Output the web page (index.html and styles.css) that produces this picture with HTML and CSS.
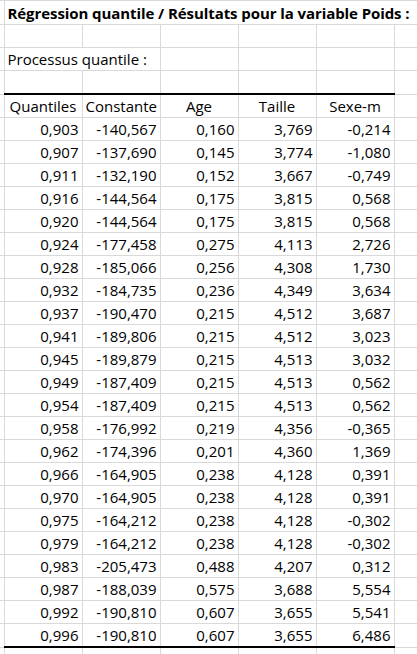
FILE: index.html
```html
<!DOCTYPE html>
<html lang="fr">
<head>
<meta charset="utf-8">
<title>Régression quantile</title>
<link rel="stylesheet" href="styles.css">
</head>
<body>
<table class="sheet">
  <colgroup>
    <col class="c-edge"><col class="c-w"><col class="c-w"><col class="c-w"><col class="c-w"><col class="c-w"><col class="c-last">
  </colgroup>
  <tbody>
    <tr class="r-top"><td></td><td></td><td></td><td></td><td></td><td></td><td></td></tr>
    <tr class="r-title"><td></td><td colspan="6" class="title">Régression quantile / Résultats pour la variable Poids :</td></tr>
    <tr><td></td><td></td><td></td><td></td><td></td><td></td><td></td></tr>
    <tr><td></td><td colspan="2" class="label">Processus quantile :</td><td></td><td></td><td></td><td></td></tr>
    <tr><td></td><td></td><td></td><td></td><td></td><td></td><td></td></tr>
    <tr class="r-head"><td></td><td>Quantiles</td><td>Constante</td><td>Age</td><td>Taille</td><td>Sexe-m</td><td></td></tr>
    <tr class="r-data"><td></td><td>0,903</td><td>-140,567</td><td>0,160</td><td>3,769</td><td>-0,214</td><td></td></tr>
    <tr class="r-data"><td></td><td>0,907</td><td>-137,690</td><td>0,145</td><td>3,774</td><td>-1,080</td><td></td></tr>
    <tr class="r-data"><td></td><td>0,911</td><td>-132,190</td><td>0,152</td><td>3,667</td><td>-0,749</td><td></td></tr>
    <tr class="r-data"><td></td><td>0,916</td><td>-144,564</td><td>0,175</td><td>3,815</td><td>0,568</td><td></td></tr>
    <tr class="r-data"><td></td><td>0,920</td><td>-144,564</td><td>0,175</td><td>3,815</td><td>0,568</td><td></td></tr>
    <tr class="r-data"><td></td><td>0,924</td><td>-177,458</td><td>0,275</td><td>4,113</td><td>2,726</td><td></td></tr>
    <tr class="r-data"><td></td><td>0,928</td><td>-185,066</td><td>0,256</td><td>4,308</td><td>1,730</td><td></td></tr>
    <tr class="r-data"><td></td><td>0,932</td><td>-184,735</td><td>0,236</td><td>4,349</td><td>3,634</td><td></td></tr>
    <tr class="r-data"><td></td><td>0,937</td><td>-190,470</td><td>0,215</td><td>4,512</td><td>3,687</td><td></td></tr>
    <tr class="r-data"><td></td><td>0,941</td><td>-189,806</td><td>0,215</td><td>4,512</td><td>3,023</td><td></td></tr>
    <tr class="r-data"><td></td><td>0,945</td><td>-189,879</td><td>0,215</td><td>4,513</td><td>3,032</td><td></td></tr>
    <tr class="r-data"><td></td><td>0,949</td><td>-187,409</td><td>0,215</td><td>4,513</td><td>0,562</td><td></td></tr>
    <tr class="r-data"><td></td><td>0,954</td><td>-187,409</td><td>0,215</td><td>4,513</td><td>0,562</td><td></td></tr>
    <tr class="r-data"><td></td><td>0,958</td><td>-176,992</td><td>0,219</td><td>4,356</td><td>-0,365</td><td></td></tr>
    <tr class="r-data"><td></td><td>0,962</td><td>-174,396</td><td>0,201</td><td>4,360</td><td>1,369</td><td></td></tr>
    <tr class="r-data"><td></td><td>0,966</td><td>-164,905</td><td>0,238</td><td>4,128</td><td>0,391</td><td></td></tr>
    <tr class="r-data"><td></td><td>0,970</td><td>-164,905</td><td>0,238</td><td>4,128</td><td>0,391</td><td></td></tr>
    <tr class="r-data"><td></td><td>0,975</td><td>-164,212</td><td>0,238</td><td>4,128</td><td>-0,302</td><td></td></tr>
    <tr class="r-data"><td></td><td>0,979</td><td>-164,212</td><td>0,238</td><td>4,128</td><td>-0,302</td><td></td></tr>
    <tr class="r-data"><td></td><td>0,983</td><td>-205,473</td><td>0,488</td><td>4,207</td><td>0,312</td><td></td></tr>
    <tr class="r-data"><td></td><td>0,987</td><td>-188,039</td><td>0,575</td><td>3,688</td><td>5,554</td><td></td></tr>
    <tr class="r-data"><td></td><td>0,992</td><td>-190,810</td><td>0,607</td><td>3,655</td><td>5,541</td><td></td></tr>
    <tr class="r-data r-lastdata"><td></td><td>0,996</td><td>-190,810</td><td>0,607</td><td>3,655</td><td>6,486</td><td></td></tr>
    <tr class="r-after"><td></td><td></td><td></td><td></td><td></td><td></td><td></td></tr>
  </tbody>
</table>
</body>
</html>
```

FILE: styles.css
```css
html, body {
  margin: 0;
  padding: 0;
  background: #ffffff;
}

body {
  font-family: "Open Sans", "Liberation Sans", sans-serif;
  font-size: 15px;
  color: #000000;
  overflow: hidden;
}

.sheet {
  border-collapse: collapse;
  table-layout: fixed;
  width: 417px;
}

.c-edge { width: 4px; }
.c-w { width: 78px; }
.c-last { width: 23px; }

.sheet td {
  border: 1px solid #d9d9d9;
  padding: 0 3px 3px 3px;
  height: 19px;
  line-height: 16px;
  vertical-align: bottom;
  white-space: nowrap;
  overflow: visible;
}

.sheet tr > td:first-child {
  border-left: 0;
  padding: 0;
}

.sheet tr > td:last-child {
  border-right: 0;
}

.sheet .r-top td {
  border-top: 0;
  height: 0;
  padding: 0;
  line-height: 0;
  font-size: 0;
}

.sheet .r-title td {
  height: 20px;
}

.title {
  font-weight: 700;
  padding-left: 4px;
  letter-spacing: -0.08px;
}

.label {
  padding-left: 4px;
}

.r-head td:nth-child(n+2):nth-child(-n+6) {
  border-top: 2px solid #000000;
  text-align: center;
}

.r-data td {
  text-align: right;
}

.r-lastdata td:nth-child(n+2):nth-child(-n+6) {
  border-bottom: 2px solid #000000;
}

.r-after td {
  border-bottom: 0;
}
```
